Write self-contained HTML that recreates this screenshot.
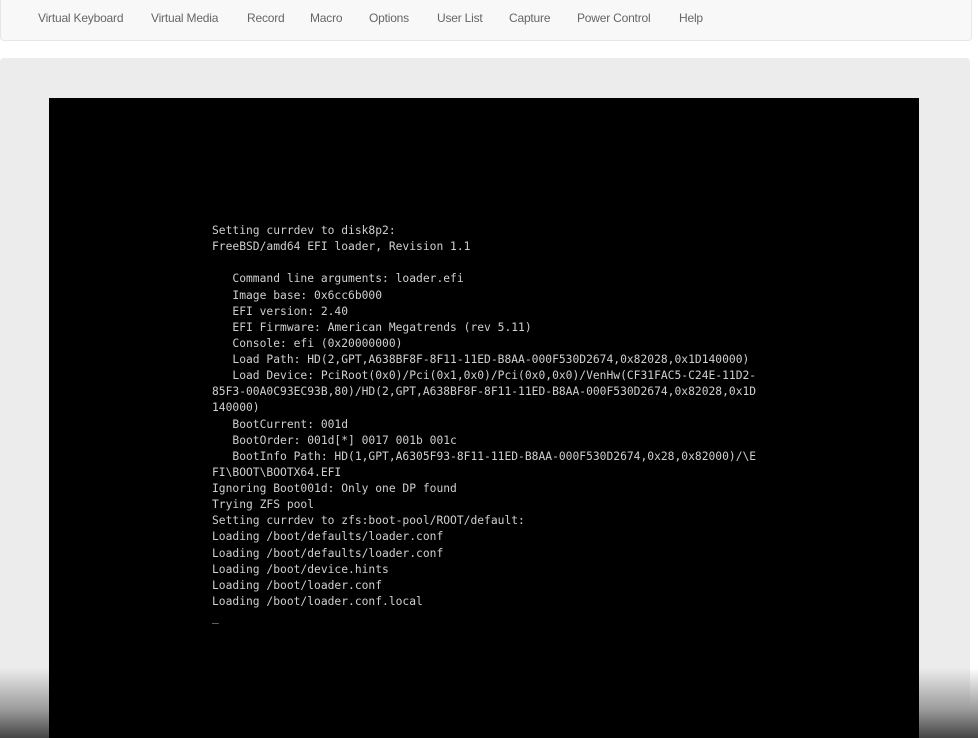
<!DOCTYPE html>
<html><head><style>
html,body{margin:0;width:978px;height:738px;overflow:hidden}
body{background:#fff;font-family:"Liberation Sans",sans-serif;position:relative}
.nav{position:absolute;left:0;top:0;width:970px;height:40px;background:#f8f8f8;border:1px solid #e7e7e7;border-top:none;border-radius:0 0 4px 4px}
.nav span{position:absolute;top:11px;font-size:12px;color:#666;letter-spacing:-0.2px}
.panel{position:absolute;left:0;top:58px;width:970px;height:680px;background:#ececec;border-radius:4px 4px 0 0}
.grad{position:absolute;left:0;top:668px;width:978px;height:70px;background:linear-gradient(#ececec00,#9a9a9a 60%,#444)}
.screen{position:absolute;left:49px;top:98px;width:870px;height:640px;background:#000}
pre{position:absolute;left:163px;top:125px;margin:0;font-family:"DejaVu Sans Mono",monospace;font-size:11.3px;line-height:16.13px;color:#cfcfcf}
</style></head><body>
<div class="nav">
<span style="left:37px">Virtual Keyboard</span>
<span style="left:150px">Virtual Media</span>
<span style="left:246px">Record</span>
<span style="left:309px">Macro</span>
<span style="left:368px">Options</span>
<span style="left:436px">User List</span>
<span style="left:508px">Capture</span>
<span style="left:576px">Power Control</span>
<span style="left:678px">Help</span>
</div>
<div class="panel"></div>
<div class="grad"></div>
<div class="screen"><pre>Setting currdev to disk8p2:
FreeBSD/amd64 EFI loader, Revision 1.1

   Command line arguments: loader.efi
   Image base: 0x6cc6b000
   EFI version: 2.40
   EFI Firmware: American Megatrends (rev 5.11)
   Console: efi (0x20000000)
   Load Path: HD(2,GPT,A638BF8F-8F11-11ED-B8AA-000F530D2674,0x82028,0x1D140000)
   Load Device: PciRoot(0x0)/Pci(0x1,0x0)/Pci(0x0,0x0)/VenHw(CF31FAC5-C24E-11D2-
85F3-00A0C93EC93B,80)/HD(2,GPT,A638BF8F-8F11-11ED-B8AA-000F530D2674,0x82028,0x1D
140000)
   BootCurrent: 001d
   BootOrder: 001d[*] 0017 001b 001c
   BootInfo Path: HD(1,GPT,A6305F93-8F11-11ED-B8AA-000F530D2674,0x28,0x82000)/\E
FI\BOOT\BOOTX64.EFI
Ignoring Boot001d: Only one DP found
Trying ZFS pool
Setting currdev to zfs:boot-pool/ROOT/default:
Loading /boot/defaults/loader.conf
Loading /boot/defaults/loader.conf
Loading /boot/device.hints
Loading /boot/loader.conf
Loading /boot/loader.conf.local
_</pre></div>
</body></html>
